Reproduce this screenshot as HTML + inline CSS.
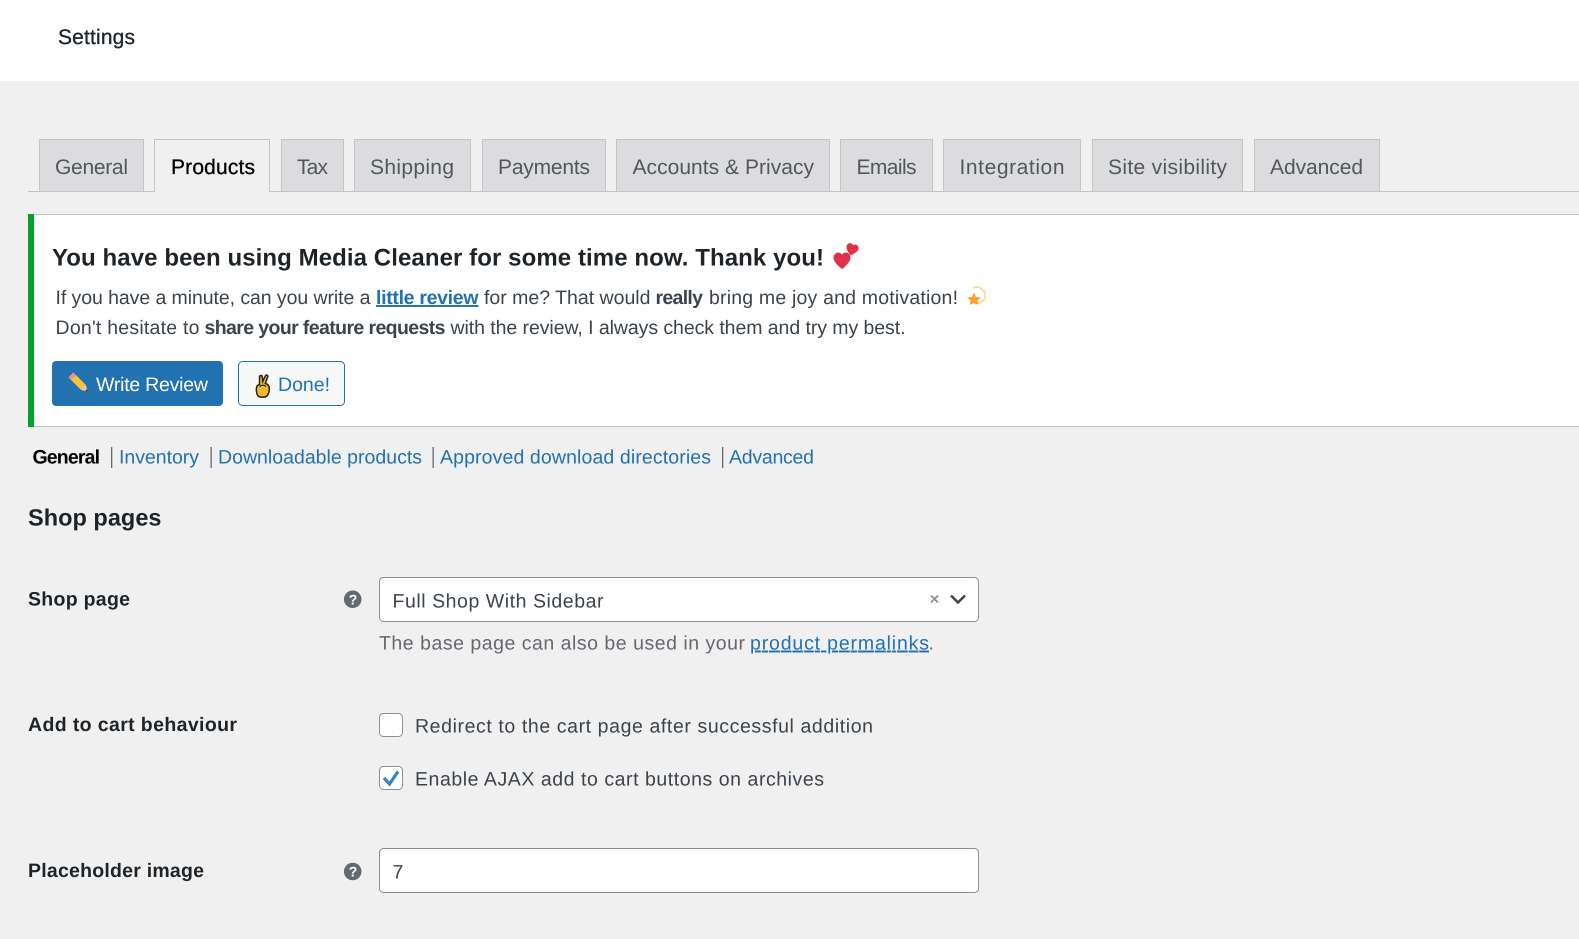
<!DOCTYPE html>
<html lang="en"><head><meta charset="utf-8"><title>Settings</title>
<style>
html,body{margin:0;padding:0;width:1579px;height:939px;overflow:hidden;background:#f0f0f1}
svg{display:block}
text{font-family:"Liberation Sans",sans-serif;font-size:19.5px;fill:#3c434a;text-rendering:geometricPrecision}
.tab{font-size:21px;fill:#50575e}
.semi{font-weight:bold}
.l{fill:#2271b1}
.d{fill:#1d2327}
</style></head><body>
<svg width="1579" height="939" viewBox="0 0 1579 939" xmlns="http://www.w3.org/2000/svg">
<rect width="1579" height="939" fill="#f0f0f1"/>
<rect width="1579" height="81" fill="#fff"/>
<text x="58" y="44" textLength="77" class="d" stroke="#1d2327" stroke-width=".3" style="font-size:21px">Settings</text>

<!-- tabs -->
<rect x="28" y="191" width="1551" height="1" fill="#c3c4c7"/>
<g fill="#dcdcde" stroke="#c3c4c7">
<rect x="39.500" y="139.500" width="104" height="52"/>
<rect x="281.500" y="139.500" width="62" height="52"/>
<rect x="354.500" y="139.500" width="116" height="52"/>
<rect x="482.500" y="139.500" width="123" height="52"/>
<rect x="616.500" y="139.500" width="213" height="52"/>
<rect x="840.500" y="139.500" width="92" height="52"/>
<rect x="943.500" y="139.500" width="137" height="52"/>
<rect x="1092.500" y="139.500" width="150" height="52"/>
<rect x="1254.500" y="139.500" width="125" height="52"/>
</g>
<path d="M154.500 191.500V139.500H269.500V191.500" fill="#f0f0f1" stroke="#c3c4c7"/>
<rect x="155" y="190" width="114" height="3" fill="#f0f0f1"/>
<text class="tab" x="55" y="174" textLength="73">General</text>
<text class="tab" style="fill:#000" stroke="#000" stroke-width=".3" x="171" y="174" textLength="84">Products</text>
<text class="tab" x="297" y="174" textLength="31">Tax</text>
<text class="tab" x="370" y="174" textLength="84">Shipping</text>
<text class="tab" x="498" y="174" textLength="92">Payments</text>
<text class="tab" x="632.500" y="174" textLength="181.500">Accounts &amp; Privacy</text>
<text class="tab" x="856.500" y="174" textLength="60">Emails</text>
<text class="tab" x="959.500" y="174" textLength="105">Integration</text>
<text class="tab" x="1108" y="174" textLength="119">Site visibility</text>
<text class="tab" x="1270" y="174" textLength="93">Advanced</text>

<!-- notice -->
<rect x="28" y="214" width="1551" height="213" fill="#fff"/>
<rect x="28" y="214" width="1551" height="1" fill="#c3c4c7"/>
<rect x="28" y="426" width="1551" height="1" fill="#c3c4c7"/>
<rect x="28" y="214" width="6" height="213" fill="#00a32a"/>
<text class="d semi" style="font-size:24px" x="52" y="265.500" textLength="772">You have been using Media Cleaner for some time now. Thank you!</text>
<path transform="translate(842 260.500)" d="M0 8.500C-6 3.500-8.500 .5-8.500-3C-8.500-6-6-8-3.500-8C-2-8-.7-7 0-5.800C.7-7 2-8 3.500-8C6-8 8.500-6 8.500-3C8.500 .5 6 3.500 0 8.500Z" fill="#e0304a"/>
<path transform="translate(852 249.500) rotate(15) scale(.72)" d="M0 8.500C-6 3.500-8.500 .5-8.500-3C-8.500-6-6-8-3.500-8C-2-8-.7-7 0-5.800C.7-7 2-8 3.500-8C6-8 8.500-6 8.500-3C8.500 .5 6 3.500 0 8.500Z" fill="#e0304a"/>

<text x="55.500" y="304" textLength="315">If you have a minute, can you write a</text>
<text class="l semi" x="376" y="304" textLength="102.500" text-decoration="underline">little review</text>
<text x="484" y="304" textLength="166.500">for me? That would</text>
<text class="semi" x="655.500" y="304" textLength="47.500">really</text>
<text x="709" y="304" textLength="249">bring me joy and motivation!</text>
<path d="M973 288C980 285 986 291 985 297C984 302 978 305 973 303" fill="none" stroke="#fbd98a" stroke-width="1.700"/>
<path d="M974 294.500L976 299L981 299.500L977.500 302.500L978.500 307L974 304.800L969.500 307L970.500 302.500L967 299.500L972 299Z" fill="#f9a12e" transform="translate(0 -2)"/>
<text x="55.500" y="334" textLength="144">Don't hesitate to</text>
<text class="semi" x="204.500" y="334" textLength="241">share your feature requests</text>
<text x="450.500" y="334" textLength="455">with the review, I always check them and try my best.</text>

<!-- buttons -->
<rect x="52" y="361" width="171" height="45" rx="4" fill="#2271b1"/>
<g transform="rotate(45 79 383)"><rect x="71" y="379.500" width="14" height="7" fill="#f7c23c"/><rect x="67.500" y="379.500" width="3.500" height="7" fill="#e8909a"/><path d="M85 379.500L91.500 383L85 386.500Z" fill="#e9c9a0"/><path d="M89 381.700L91.500 383L89 384.300Z" fill="#333"/></g>
<text style="fill:#fff" x="96" y="391" textLength="112">Write Review</text>
<rect x="238.500" y="361.500" width="106" height="44" rx="4" fill="#f6f7f7" stroke="#2271b1"/>
<path d="M258 396C256 393 256 388.500 257 386L259 384.500L259.500 384.500L259.500 377C259.700 375 262.200 375 262.300 377L262.700 381.500L265.500 375.700C266.200 374.500 268.300 375.200 267.700 376.800L265.300 383.500C267.800 384 269.200 386 269.300 388.500C269.400 391.500 268.500 394 267 396C265 397.500 260 397.500 258 396Z" fill="#f5b82a" stroke="#222" stroke-width="1.500"/>
<path d="M259.500 386.500C261.500 385 264 385 266 386.500" fill="none" stroke="#222" stroke-width="1.200"/>
<text class="l" x="278" y="391" textLength="52">Done!</text>

<!-- subsub -->
<text style="fill:#000" class="semi" x="32.500" y="463.500" textLength="67.500">General</text>
<rect x="111" y="447" width="1.300" height="21" fill="#646970"/>
<text class="l" x="119" y="463.500" textLength="80">Inventory</text>
<rect x="210.500" y="447" width="1.300" height="21" fill="#646970"/>
<text class="l" x="218" y="463.500" textLength="204">Downloadable products</text>
<rect x="432.500" y="447" width="1.300" height="21" fill="#646970"/>
<text class="l" x="440" y="463.500" textLength="271">Approved download directories</text>
<rect x="722" y="447" width="1.300" height="21" fill="#646970"/>
<text class="l" x="729" y="463.500" textLength="85">Advanced</text>

<text class="d semi" style="font-size:23.500px" x="28" y="525.700" textLength="133.500">Shop pages</text>

<!-- Shop page -->
<text class="d semi" x="28" y="605.500" textLength="102">Shop page</text>
<circle cx="352.700" cy="599.300" r="8.800" fill="#646970"/>
<text style="font-size:14px;font-weight:bold;fill:#fff" x="348.800" y="604.300">?</text>
<rect x="379.500" y="577.500" width="599" height="44" rx="4" fill="#fff" stroke="#8c8f94"/>
<text x="392.500" y="607.500" textLength="211">Full Shop With Sidebar</text>
<path d="M931 595.500L938 602.500M938 595.500L931 602.500" stroke="#8c8f94" stroke-width="1.800" fill="none"/>
<path d="M951 595.500L958 602.500L965 595.500" stroke="#3c434a" stroke-width="2.400" fill="none"/>
<text style="fill:#646970" x="379" y="649.500" textLength="366">The base page can also be used in your</text>
<text class="l" x="750" y="649.500" textLength="179" text-decoration="underline">product permalinks</text>
<text style="fill:#646970" x="928.500" y="649.500">.</text>

<!-- add to cart -->
<text class="d semi" x="28" y="731" textLength="209">Add to cart behaviour</text>
<rect x="379.500" y="713.500" width="23" height="23" rx="4" fill="#fff" stroke="#8c8f94"/>
<text x="415" y="732.500" textLength="458">Redirect to the cart page after successful addition</text>
<rect x="379.500" y="766.500" width="23" height="23" rx="4" fill="#fff" stroke="#8c8f94"/>
<path d="M384 778L389.500 784L398 771.500" fill="none" stroke="#3582c4" stroke-width="3.200"/>
<text x="415" y="785.500" textLength="409">Enable AJAX add to cart buttons on archives</text>

<!-- placeholder -->
<text class="d semi" x="28" y="877" textLength="176">Placeholder image</text>
<circle cx="352.700" cy="871.500" r="8.800" fill="#646970"/>
<text style="font-size:14px;font-weight:bold;fill:#fff" x="348.800" y="876.500">?</text>
<rect x="379.500" y="848.500" width="599" height="44" rx="4" fill="#fff" stroke="#8c8f94"/>
<text x="392.500" y="878.500">7</text>
</svg>
</body></html>
